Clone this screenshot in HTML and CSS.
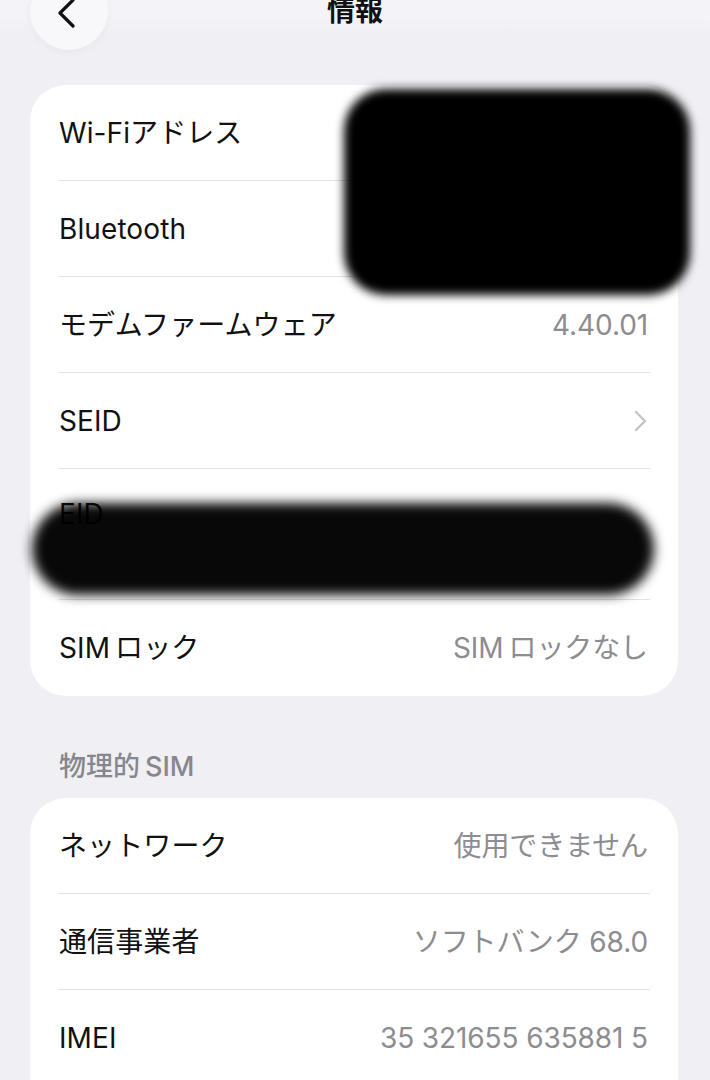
FILE: index.html
```html
<!DOCTYPE html>
<html lang="ja">
<head>
<meta charset="UTF-8">
<meta name="viewport" content="width=device-width, initial-scale=1.0">
<title>情報</title>
<link rel="stylesheet" href="styles.css">
</head>
<body>
  <div class="nav">
    <div class="back">
      <svg width="22" height="30" viewBox="0 0 22 30">
        <path d="M18 2 L5 15 L18 28" fill="none" stroke="#111" stroke-width="3.2" stroke-linecap="round" stroke-linejoin="round"/>
      </svg>
    </div>
    <h1 class="title">情報</h1>
    <div></div>
  </div>

  <div class="card">
    <div class="row"><span class="label">Wi-Fiアドレス</span></div>
    <div class="row"><span class="label">Bluetooth</span></div>
    <div class="row"><span class="label">モデムファームウェア</span><span class="value">4.40.01</span></div>
    <div class="row">
      <span class="label">SEID</span>
      <svg class="chev" width="13" height="22" viewBox="0 0 13 22">
        <path d="M2 2 L11 11 L2 20" fill="none" stroke="#c4c4c7" stroke-width="2.4" stroke-linecap="round" stroke-linejoin="round"/>
      </svg>
    </div>
    <div class="row row-tall">
      <span class="label">EID</span>
      <span class="sub"></span>
    </div>
    <div class="row row-last"><span class="label">SIM<span class="gap"></span>ロック</span><span class="value">SIM<span class="gap"></span>ロックなし</span></div>

    <!-- 塗りつぶし -->
    <div class="redact redact-1"></div>
    <div class="redact redact-2"></div>
  </div>

  <div class="section-title">物理的<span class="gap"></span>SIM</div>
  <div class="card card-open">
    <div class="row"><span class="label">ネットワーク</span><span class="value">使用できません</span></div>
    <div class="row"><span class="label">通信事業者</span><span class="value">ソフトバンク 68.0</span></div>
    <div class="row row-last"><span class="label">IMEI</span><span class="value">35 321655 635881 5</span></div>
  </div>
</body>
</html>
```

FILE: styles.css
```css
body {
  margin: 0;
  padding: 0;
  width: 710px;
  height: 1080px;
  overflow: hidden;
  background-color: #efeff4;
  font-family: Inter, "Noto Sans CJK JP", sans-serif;
  color: #111;
}
.nav {
  display: grid;
  grid-template-columns: 78px 1fr 78px;
  align-items: start;
  padding: 0 30px;
  height: 85px;
  background: linear-gradient(#f4f4f8 0, #f4f4f8 18px, #efeff4 34px);
}
.back {
  width: 78px;
  height: 78px;
  margin-top: -28px;
  border-radius: 50%;
  background-color: #f8f8fb;
  box-shadow: 0 2px 8px rgba(0, 0, 0, 0.04);
  display: flex;
  align-items: flex-end;
  justify-content: center;
  padding-bottom: 22px;
  box-sizing: border-box;
}
.back svg {
  margin-right: 6px;
}
.title {
  margin: -6px 0 0;
  text-align: center;
  font-size: 28px;
  font-weight: 700;
  line-height: 34px;
  color: #111;
}
.card {
  position: relative;
  margin: 0 32px 0 30px;
  background-color: #fff;
  border-radius: 36px;
}
.card-open {
  padding-bottom: 40px;
}
.row {
  display: flex;
  justify-content: space-between;
  align-items: center;
  height: 96px;
  margin: 0 28px 0 29px;
  padding-right: 2px;
  box-sizing: border-box;
  border-bottom: 1px solid #e2e2e5;
}
.row-last {
  border-bottom: none;
}
.row-tall {
  height: 131px;
  flex-direction: column;
  align-items: flex-start;
  justify-content: flex-start;
  padding-top: 28px;
}
.sub {
  display: block;
  height: 40px;
}
.label {
  font-size: 28px;
  line-height: 34px;
  letter-spacing: 0.1px;
}
.value {
  font-size: 28px;
  line-height: 34px;
  color: #8c8c91;
  letter-spacing: -0.1px;
}
.gap {
  display: inline-block;
  width: 5px;
}
.chev {
  margin-right: 1px;
}
.section-title {
  padding: 55px 0 0 59px;
  margin-bottom: 15px;
  font-size: 27px;
  font-weight: 500;
  line-height: 32px;
  color: #87878c;
}
.redact {
  position: absolute;
  background-color: #000;
  filter: blur(5px);
}
.redact-1 {
  left: 314px;
  top: 4px;
  width: 346px;
  height: 206px;
  border-radius: 42px;
}
.redact-2 {
  left: 2px;
  top: 418px;
  width: 622px;
  height: 92px;
  border-radius: 46px;
  background-color: rgba(0, 0, 0, 0.97);
  filter: blur(6px);
}
```
